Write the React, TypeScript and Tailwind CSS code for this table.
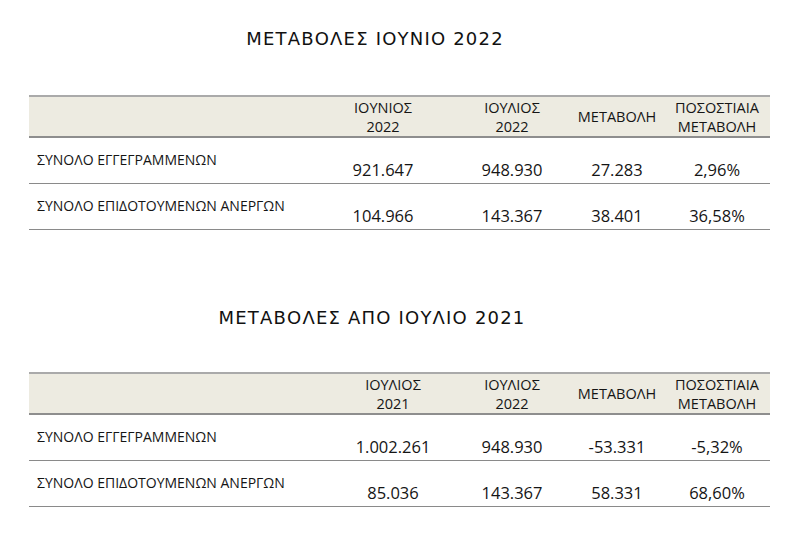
import React from "react";

type Row = { label: string; a: string; b: string; c: string; d: string };

const body = { fontFamily: '"Open Sans", "Noto Sans", sans-serif' };
const titleFont = { fontFamily: '"DejaVu Sans", Verdana, sans-serif' };

function Table({
  h1,
  h2,
  rows,
  cols,
}: {
  h1: [string, string];
  h2: [string, string];
  rows: Row[];
  cols: string;
}) {
  return (
    <div className="ml-[29px] w-[741px] text-[#151515]" style={body}>
      <div
        className={`grid ${cols} h-[43px] items-center border-t-2 border-b-2 border-t-[#aaaaaa] border-b-[#8e8e8e] bg-[#edebe1] text-[14.5px] leading-[19px]`}
      >
        <div />
        <div className="text-center">
          <div>{h1[0]}</div>
          <div>{h1[1]}</div>
        </div>
        <div className="text-center">
          <div>{h2[0]}</div>
          <div>{h2[1]}</div>
        </div>
        <div className="text-center">ΜΕΤΑΒΟΛΗ</div>
        <div className="text-center">
          <div>ΠΟΣΟΣΤΙΑΙΑ</div>
          <div>ΜΕΤΑΒΟΛΗ</div>
        </div>
      </div>
      {rows.map((r) => (
        <div
          key={r.label}
          className={`grid ${cols} h-[46px] border-b border-[#8a8a8a]`}
        >
          <div className="pl-[8px] pt-[12px] text-[14px] leading-[20px]">
            {r.label}
          </div>
          <div className="self-end pb-[1px] text-center text-[16.5px] leading-[24px]">
            {r.a}
          </div>
          <div className="self-end pb-[1px] text-center text-[16.5px] leading-[24px]">
            {r.b}
          </div>
          <div className="self-end pb-[1px] text-center text-[16.5px] leading-[24px]">
            {r.c}
          </div>
          <div className="self-end pb-[1px] text-center text-[16.5px] leading-[24px]">
            {r.d}
          </div>
        </div>
      ))}
    </div>
  );
}

export default function App() {
  return (
    <div className="h-[545px] w-[800px] overflow-hidden bg-white pt-[27px]">
      <div
        className="w-[750px] text-center text-[18px] leading-[24px] tracking-[1.2px] text-[#111111]"
        style={titleFont}
      >
        ΜΕΤΑΒΟΛΕΣ ΙΟΥΝΙΟ 2022
      </div>
      <div className="mt-[44px]">
        <Table
          h1={["ΙΟΥΝΙΟΣ", "2022"]}
          h2={["ΙΟΥΛΙΟΣ", "2022"]}
          cols="grid-cols-[283px_142px_116px_94px_106px]"
          rows={[
            { label: "ΣΥΝΟΛΟ ΕΓΓΕΓΡΑΜΜΕΝΩΝ", a: "921.647", b: "948.930", c: "27.283", d: "2,96%" },
            { label: "ΣΥΝΟΛΟ ΕΠΙΔΟΤΟΥΜΕΝΩΝ ΑΝΕΡΓΩΝ", a: "104.966", b: "143.367", c: "38.401", d: "36,58%" },
          ]}
        />
      </div>
      <div
        className="mt-[76px] w-[744px] text-center text-[18px] leading-[24px] tracking-[1.2px] text-[#111111]"
        style={titleFont}
      >
        ΜΕΤΑΒΟΛΕΣ ΑΠΟ ΙΟΥΛΙΟ 2021
      </div>
      <div className="mt-[42px]">
        <Table
          h1={["ΙΟΥΛΙΟΣ", "2021"]}
          h2={["ΙΟΥΛΙΟΣ", "2022"]}
          cols="grid-cols-[303px_122px_116px_94px_106px]"
          rows={[
            { label: "ΣΥΝΟΛΟ ΕΓΓΕΓΡΑΜΜΕΝΩΝ", a: "1.002.261", b: "948.930", c: "-53.331", d: "-5,32%" },
            { label: "ΣΥΝΟΛΟ ΕΠΙΔΟΤΟΥΜΕΝΩΝ ΑΝΕΡΓΩΝ", a: "85.036", b: "143.367", c: "58.331", d: "68,60%" },
          ]}
        />
      </div>
    </div>
  );
}
